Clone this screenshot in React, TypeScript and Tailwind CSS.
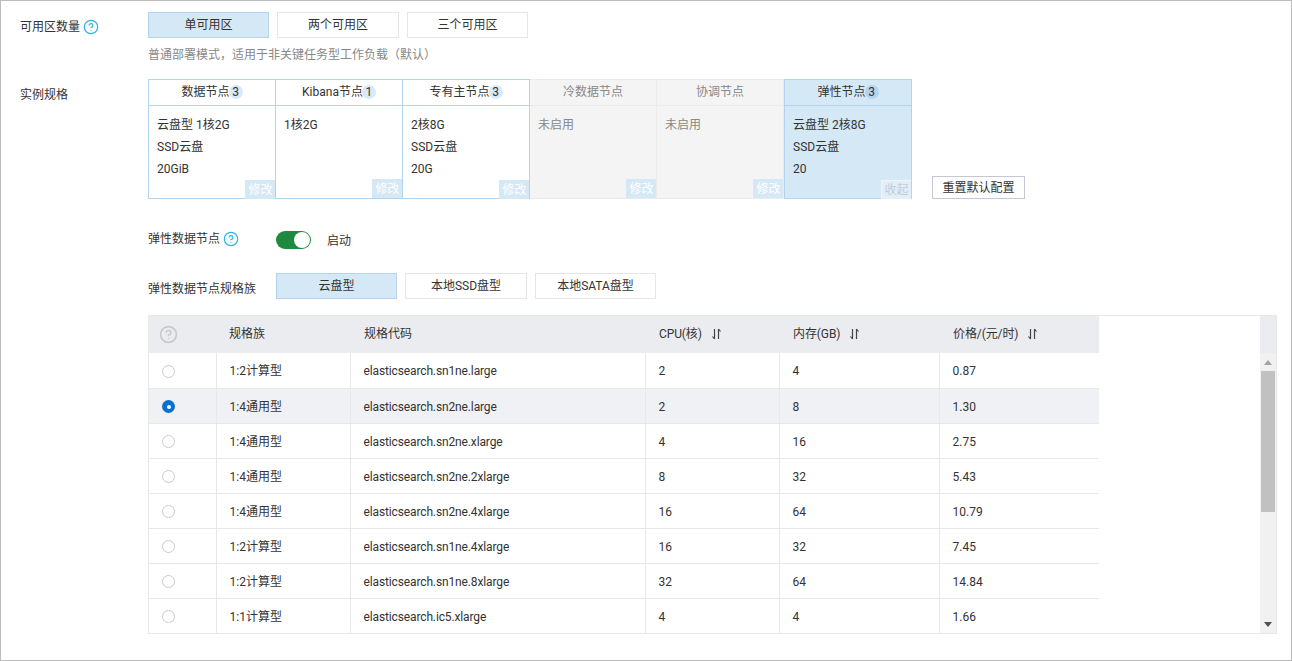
import { CircleHelp } from "lucide-react";

const font = { cjk: "font-['Roboto','Noto_Sans_CJK_SC',sans-serif]" };

const nodes = [
  { title: "数据节点", badge: "3", lines: ["云盘型 1核2G", "SSD云盘", "20GiB"], state: "on", action: "修改" },
  { title: "Kibana节点", badge: "1", lines: ["1核2G"], state: "on", action: "修改" },
  { title: "专有主节点", badge: "3", lines: ["2核8G", "SSD云盘", "20G"], state: "on", action: "修改" },
  { title: "冷数据节点", lines: ["未启用"], state: "off", action: "修改" },
  { title: "协调节点", lines: ["未启用"], state: "off", action: "修改" },
  { title: "弹性节点", badge: "3", lines: ["云盘型 2核8G", "SSD云盘", "20"], state: "active", action: "收起" },
];

const rows = [
  ["1:2计算型", "elasticsearch.sn1ne.large", "2", "4", "0.87"],
  ["1:4通用型", "elasticsearch.sn2ne.large", "2", "8", "1.30"],
  ["1:4通用型", "elasticsearch.sn2ne.xlarge", "4", "16", "2.75"],
  ["1:4通用型", "elasticsearch.sn2ne.2xlarge", "8", "32", "5.43"],
  ["1:4通用型", "elasticsearch.sn2ne.4xlarge", "16", "64", "10.79"],
  ["1:2计算型", "elasticsearch.sn1ne.4xlarge", "16", "32", "7.45"],
  ["1:2计算型", "elasticsearch.sn1ne.8xlarge", "32", "64", "14.84"],
  ["1:1计算型", "elasticsearch.ic5.xlarge", "4", "4", "1.66"],
];

const Help = () => <CircleHelp size={16} strokeWidth={1.75} className="text-[#2bb5e4]" />;

const SortIcon = () => (
  <svg width="11" height="12" viewBox="0 0 11 12" className="ml-[9px] text-[#444]" fill="none" stroke="currentColor" strokeWidth="1.2">
    <path d="M3.5 1v10M1.5 8.5l2 2.5" />
    <path d="M7.5 11V1M7.5 1l2 2.5" />
  </svg>
);

const Choice = ({ label, active, className }: { label: string; active?: boolean; className: string }) => (
  <div
    className={`flex h-[26px] items-center justify-center border text-[12px] text-[#333] ${className} ${
      active ? "border-[#b3d4ef] bg-[#d5e8f6]" : "border-[#e6e6e6] bg-white"
    }`}
  >
    {label}
  </div>
);

const NodeCell = ({ node, first }: { node: (typeof nodes)[number]; first: boolean }) => {
  const off = node.state === "off";
  const active = node.state === "active";
  const border = off ? "border-[#ebebeb]" : "border-[#b3d4ef]";
  return (
    <div
      className={`flex h-[120px] flex-col border-y border-r ${border} ${first || active ? "w-[128px] border-l" : "w-[127px]"} ${
        off ? "bg-[#f4f4f4] text-[#888]" : active ? "bg-[#d5e8f6] text-[#333]" : "bg-white text-[#333]"
      }`}
    >
      <div className={`flex h-[26px] shrink-0 items-center justify-center border-b pb-[2px] ${border}`}>
        <span>{node.title}</span>
        {node.badge && (
          <span
            className={`-ml-px flex h-[14px] w-[14px] items-center justify-center rounded-full ${
              active ? "bg-[#b5d4f0]" : "bg-[#d9e9f7]"
            }`}
          >
            {node.badge}
          </span>
        )}
      </div>
      <div className="pl-[8px] pt-[8px] leading-[22px]">
        {node.lines.map((line) => (
          <div key={line}>{line}</div>
        ))}
      </div>
      <div
        className={`mt-auto flex h-[19px] w-[30px] items-center justify-center self-end border-t border-l ${
          active ? "border-[#f0f5fa] bg-[#e3eef7] text-[#bccddb]" : "border-[#d5e8f6] bg-[#d5e8f6] text-white"
        }`}
      >
        {node.action}
      </div>
    </div>
  );
};

const Radio = ({ checked }: { checked: boolean }) =>
  checked ? (
    <span className="flex h-[13px] w-[13px] items-center justify-center rounded-full bg-[#0a6fd0]">
      <span className="h-[4px] w-[4px] rounded-full bg-white" />
    </span>
  ) : (
    <span className="block h-[13px] w-[13px] rounded-full border border-[#c8cad0] bg-white" />
  );

export default function App() {
  return (
    <div className={`h-[661px] w-[1292px] overflow-hidden border border-[#bdbdbd] bg-white text-[12px] text-[#333] ${font.cjk}`}>
      <div className="flex pt-[11px]">
        <div className="flex h-[26px] w-[147px] items-center gap-[3px] pl-[19px] pt-[4px] text-[#333]">
          <span>可用区数量</span>
          <Help />
        </div>
        <div>
          <div className="flex gap-[8px]">
            <Choice label="单可用区" active className="w-[121px]" />
            <Choice label="两个可用区" className="w-[122px]" />
            <Choice label="三个可用区" className="w-[121px]" />
          </div>
          <p className="mt-[8px] h-[18px] leading-[18px] text-[#888]">普通部署模式，适用于非关键任务型工作负载（默认）</p>
        </div>
      </div>

      <div className="mt-[15px] flex">
        <div className="w-[147px] pl-[19px] pt-[8px] leading-[16px]">实例规格</div>
        <div className="flex">
          {nodes.map((node, i) => (
            <NodeCell key={node.title} node={node} first={i === 0} />
          ))}
          <div className="ml-[20px] flex h-[23px] w-[93px] items-center justify-center self-end border border-[#c4c8d6]">
            重置默认配置
          </div>
        </div>
      </div>

      <div className="ml-[147px]">
        <div className="mt-[32px] flex h-[18px] items-center">
          <div className="flex w-[128px] items-center gap-[3px] pb-[2px]">
            <span>弹性数据节点</span>
            <Help />
          </div>
          <div className="flex h-[18px] w-[35px] items-center justify-end rounded-full bg-[#1f8a3f] pr-[1px]">
            <span className="h-[16px] w-[16px] rounded-full bg-white" />
          </div>
          <span className="ml-[16px] pt-[2px]">启动</span>
        </div>

        <div className="mt-[24px] flex items-center">
          <div className="w-[128px] pt-[6px]">弹性数据节点规格族</div>
          <div className="flex gap-[8px]">
            <Choice label="云盘型" active className="w-[121px]" />
            <Choice label="本地SSD盘型" className="w-[122px]" />
          </div>
          <Choice label="本地SATA盘型" className="ml-[8px] w-[121px]" />
        </div>

        <div className="mt-[16px] flex h-[319px] w-[1129px] border border-[#e8e8e8]">
          <div className="min-w-0 flex-1 overflow-hidden">
            <table className="w-[950px] table-fixed border-collapse">
              <colgroup>
                <col className="w-[67px]" />
                <col className="w-[134px]" />
                <col className="w-[295px]" />
                <col className="w-[134px]" />
                <col className="w-[160px]" />
                <col className="w-[160px]" />
              </colgroup>
              <thead>
                <tr className="h-[37px] bg-[#ebecf0] text-left font-normal">
                  <th className="pl-[10px] font-normal">
                    <CircleHelp size={19} strokeWidth={2} className="text-[#c6c8cc]" />
                  </th>
                  <th className="pb-[2px] pl-[13px] font-normal">规格族</th>
                  <th className="pb-[2px] pl-[14px] font-normal">规格代码</th>
                  {["CPU(核)", "内存(GB)", "价格/(元/时)"].map((title) => (
                    <th key={title} className="pb-[2px] pl-[14px] font-normal">
                      <span className="flex items-center">
                        <span className="tracking-[-0.1px]">{title}</span>
                        <SortIcon />
                      </span>
                    </th>
                  ))}
                </tr>
              </thead>
              <tbody>
                {rows.map((row, i) => (
                  <tr key={row[1]} className={`h-[35px] border-b border-[#e8e8e8] ${i === 1 ? "bg-[#f0f1f5]" : "bg-white"}`}>
                    <td className="border-r border-[#e8e8e8] pl-[13px] pt-[2px]">
                      <Radio checked={i === 1} />
                    </td>
                    {row.map((value, j) => (
                      <td
                        key={j}
                        className={`pl-[13px] pt-[2px] ${j < 4 ? "border-r border-[#e8e8e8]" : ""} ${j === 1 ? "tracking-[-0.13px]" : ""}`}
                      >
                        {value}
                      </td>
                    ))}
                  </tr>
                ))}
              </tbody>
            </table>
          </div>
          <div className="flex w-[16px] shrink-0 flex-col items-center bg-[#f1f1f1]">
            <div className="h-[37px] w-full shrink-0 bg-[#ebecf0]" />
            <div className="mt-[7px] h-0 w-0 border-x-[4px] border-b-[5px] border-x-transparent border-b-[#a3a3a3]" />
            <div className="mt-[6px] h-[141px] w-[14px] bg-[#c1c1c1]" />
            <div className="mt-[110px] h-0 w-0 border-x-[4px] border-t-[5px] border-x-transparent border-t-[#505050]" />
          </div>
        </div>
      </div>
    </div>
  );
}
